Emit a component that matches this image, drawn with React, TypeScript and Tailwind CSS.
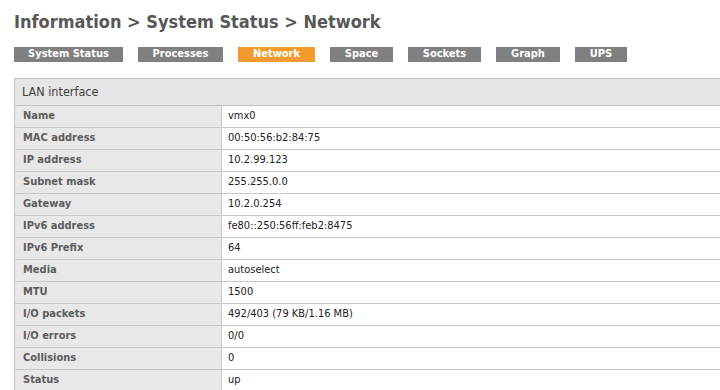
import React from 'react';

const tabs: { label: string; width: string; active?: boolean }[] = [
    { label: 'System Status', width: 'w-[109px]' },
    { label: 'Processes', width: 'w-[85px]' },
    { label: 'Network', width: 'w-[77px]', active: true },
    { label: 'Space', width: 'w-[63px]' },
    { label: 'Sockets', width: 'w-[73px]' },
    { label: 'Graph', width: 'w-[64px]' },
    { label: 'UPS', width: 'w-[52px]' },
];

const rows: [string, string][] = [
    ['Name', 'vmx0'],
    ['MAC address', '00:50:56:b2:84:75'],
    ['IP address', '10.2.99.123'],
    ['Subnet mask', '255.255.0.0'],
    ['Gateway', '10.2.0.254'],
    ['IPv6 address', 'fe80::250:56ff:feb2:8475'],
    ['IPv6 Prefix', '64'],
    ['Media', 'autoselect'],
    ['MTU', '1500'],
    ['I/O packets', '492/403 (79 KB/1.16 MB)'],
    ['I/O errors', '0/0'],
    ['Collisions', '0'],
    ['Status', 'up'],
];

export default function App() {
    return (
        <div className="w-[720px] h-[390px] overflow-hidden bg-white pl-[14px] font-['DejaVu_Sans_Condensed','DejaVu_Sans',sans-serif]">
            <h1 className="pt-[10px] h-[47px] text-[18px] leading-[24px] font-bold text-[#585858]">
                Information &gt; System Status &gt; Network
            </h1>
            <div className="flex gap-[15px] h-[15px]">
                {tabs.map((t) => (
                    <div
                        key={t.label}
                        className={`${t.width} flex items-center justify-center text-[11px] font-bold text-white ${
                            t.active ? 'bg-[#f29a2e]' : 'bg-[#808080]'
                        }`}
                    >
                        {t.label}
                    </div>
                ))}
            </div>
            <table className="mt-[16px] w-[720px] border-collapse text-[11px]">
                <thead>
                    <tr>
                        <th
                            colSpan={2}
                            className="h-[27px] bg-[#e6e6e6] border border-[#c2c2c2] text-left font-normal text-[12.5px] text-[#404040] pl-[7px]"
                        >
                            LAN interface
                        </th>
                    </tr>
                </thead>
                <tbody>
                    {rows.map(([k, v]) => (
                        <tr key={k}>
                            <td className="w-[207px] h-[22px] bg-[#e8e8e8] border border-[#c8c8c8] pl-[8px] font-bold text-[#5c5c5c]">
                                {k}
                            </td>
                            <td className="h-[22px] border border-[#c8c8c8] pl-[6px] text-[#222]">
                                {v}
                            </td>
                        </tr>
                    ))}
                </tbody>
            </table>
        </div>
    );
}
